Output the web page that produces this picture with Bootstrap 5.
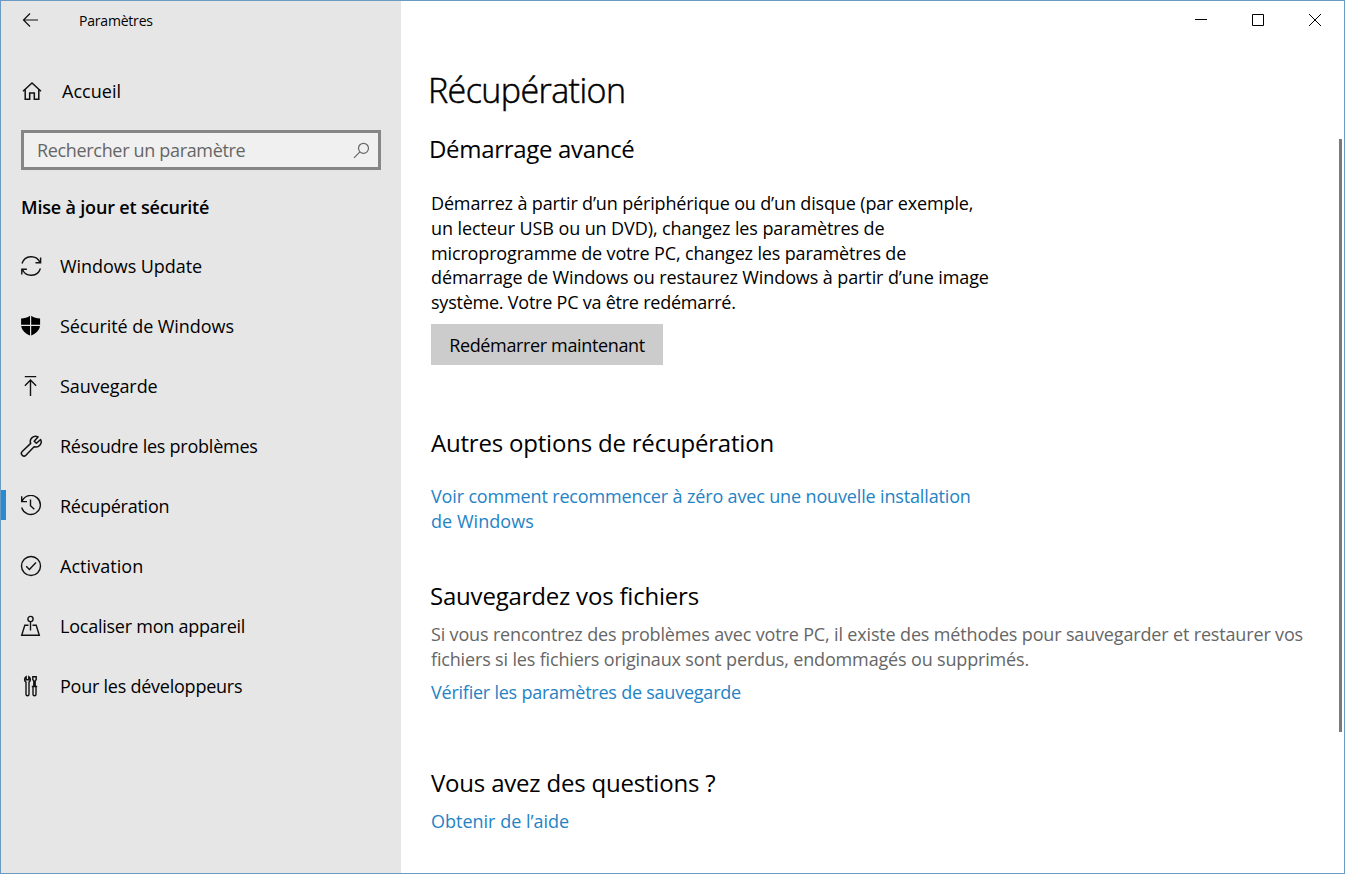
<!DOCTYPE html>
<html lang="fr">
<head>
<meta charset="utf-8">
<meta name="viewport" content="width=device-width, initial-scale=1">
<title>Paramètres</title>
<link href="https://cdn.jsdelivr.net/npm/bootstrap@5.3.0/dist/css/bootstrap.min.css" rel="stylesheet">
<style>
  body { font-family: "Open Sans", "Noto Sans", sans-serif; font-size: 18px; line-height: 24.8px; letter-spacing: -.15px; color: #000; }
  .app-window { border: 1px solid #6b9bc3; background: #fff; }
  .side-pane { width: 400px; background: #e6e6e6; }
  .side-title { height: 40px; font-size: 14px; padding-left: 21px; letter-spacing: -.2px; }
  .side-title svg { margin: -2px 40px 0 0; }
  .side-link { height: 60px; padding: 0 0 0 19px; color: #000; border-radius: 0; position: relative; letter-spacing: -.24px; }
  .side-link:hover { color: #000; }
  .side-link svg { width: 22px; height: 22px; margin-right: 18px; flex: none; }
  .side-link.active::before { content: ""; position: absolute; left: 0; top: 14px; width: 5px; height: 30px; background: #2a8ad0; }
  .home-link { height: 60px; margin-top: 20px; }
  .home-link svg { margin-right: 20px; }
  .search-box { height: 40px; margin: 9px 20px 0; border: 3px solid #868686; background: #f0f0f0; padding: 0 8px 0 13px; color: #666; letter-spacing: -.33px; }
  .side-head { height: 59px; margin: 7px 0 0 20px; font-size: 18px; font-weight: 600; letter-spacing: -.18px; line-height: 60px; }
  .ls-wide { letter-spacing: .05px; }
  .ls-zero { letter-spacing: -.06px; }
  .caption-bar { height: 38px; padding-right: 22px; gap: 43px; }
  .page-body { padding: 0 36px 0 30px; }
  .page-title { font-size: 34px; font-weight: 300; -webkit-text-stroke: .5px #000; letter-spacing: -.58px; line-height: 46px; margin: 28px 0 0 -3px; }
  .section-title { font-size: 24px; font-weight: 400; line-height: 34px; letter-spacing: -.2px; margin: 0; }
  .t-line { display: block; white-space: nowrap; }
  .lines-a { margin-top: 25px; }
  .l-2 { letter-spacing: -.1px; }
  .l-5 { letter-spacing: -.23px; }
  .restart-btn { width: 232px; height: 41px; margin-top: 9px; border: 0; border-radius: 0; background: #ccc; color: #000; font-size: 18px; letter-spacing: -.36px; padding: 1px 0 0; line-height: 41px; }
  .action-link { color: #2483c5; text-decoration: none; }
  .muted-text { color: #666; letter-spacing: -.16px; line-height: 25px; }
  .scroll-thumb { position: absolute; right: 2px; top: 138px; width: 3px; height: 593px; background: #7a7a7a; }
  .title-adv { margin: 19px 0 0 -2px; letter-spacing: -.31px; }
  .sec-other { margin-top: 61px; }
  .sec-other .action-link { margin-top: 24px; }
  .sec-files { margin-top: 45px; }
  .sec-files .section-title { margin-left: -1px; }
  .sec-files .muted-text { margin-top: 9px; }
  .sec-files .action-link { margin-top: 8px; }
  .sec-help { margin-top: 61.5px; }
  .sec-help .action-link { margin-top: 9px; letter-spacing: 0; }
</style>
</head>
<body class="overflow-hidden">
<div class="app-window d-flex vh-100 position-relative">
  <aside class="side-pane flex-shrink-0 d-flex flex-column">
    <div class="side-title d-flex align-items-center">
      <svg width="17" height="16" viewBox="0 0 17 16" fill="none" stroke="#111" stroke-width="1.2"><path d="M16 8H1.6M8 1.5 1.5 8 8 14.5"/></svg>
      <span>Paramètres</span>
    </div>
    <a class="side-link home-link nav-link d-flex align-items-center" href="#">
      <svg viewBox="0 0 22 22" fill="none" stroke="#111" stroke-width="1.5"><path d="M3 11.2 12 3l9 8.2M5.2 9.5V19.3H9.7V13H14.3V19.3H18.8V9.5"/></svg>
      <span class="ls-wide">Accueil</span>
    </a>
    <div class="search-box d-flex align-items-center justify-content-between">
      <span>Rechercher un paramètre</span>
      <svg width="17" height="17" viewBox="0 0 17 17" fill="none" stroke="#666" stroke-width="1.2"><circle cx="10.5" cy="6.3" r="5"/><path d="M6.9 9.9 1 15.8"/></svg>
    </div>
    <h2 class="side-head mb-0">Mise à jour et sécurité</h2>
    <nav class="nav flex-column">
      <a class="side-link nav-link d-flex align-items-center" href="#">
        <svg viewBox="0 0 22 22" fill="none" stroke="#111" stroke-width="1.4"><path d="M2 8.5A9.6 9.6 0 0 1 20 7.5M20.6 2.5V7.7H15.5M20.4 13.5A9.6 9.6 0 0 1 2.4 14.5M1.8 19.5V14.3H6.9"/></svg>
        <span class="ls-zero">Windows Update</span>
      </a>
      <a class="side-link nav-link d-flex align-items-center" href="#">
        <svg viewBox="0 0 22 22" fill="#000"><path d="M10 .8V9.8H1.1V3.4C4.5 3.4 7.5 2.6 10 .8ZM11.2 .8C13.7 2.6 16.700 3.4 20.1 3.4V9.8H11.2ZM1.200 11H10V20.6C5 18.3 1.8 15.3 1.2 11ZM11.2 11H20C19.400 15.3 16.200 18.3 11.2 20.6Z"/></svg>
        <span class="ls-zero">Sécurité de Windows</span>
      </a>
      <a class="side-link nav-link d-flex align-items-center" href="#">
        <svg viewBox="0 0 22 22" fill="none" stroke="#111" stroke-width="1.4"><path d="M4.8 1.6H16.2M10.5 21V5.2M4.9 10.7 10.5 5.1 16.1 10.7"/></svg>
        <span class="ls-zero">Sauvegarde</span>
      </a>
      <a class="side-link nav-link d-flex align-items-center" href="#">
        <svg viewBox="0 0 22 22" fill="none" stroke="#111" stroke-width="1.5" stroke-linejoin="round"><path d="M18 1.9A5.2 5.2 0 0 0 10.7 8.4L2.2 16.5A2.6 2.6 0 0 0 5.9 20.2L14.1 11.7A5.2 5.2 0 0 0 20.6 4.5L16.4 8.3 14.2 6.2Z"/></svg>
        <span>Résoudre les problèmes</span>
      </a>
      <a class="side-link nav-link active d-flex align-items-center" href="#">
        <svg viewBox="0 0 22 22" fill="none" stroke="#111" stroke-width="1.4"><path d="M2.3 5.8A9.5 9.5 0 1 1 1.7 12.5M1.7 1.2V6.6H7M10.5 4.500V10.700L14.3 14.3"/></svg>
        <span>Récupération</span>
      </a>
      <a class="side-link nav-link d-flex align-items-center" href="#">
        <svg viewBox="0 0 22 22" fill="none" stroke="#111" stroke-width="1.4"><circle cx="11" cy="11" r="9.5"/><path d="M6.2 11.2 9.4 14.4 16 7.6"/></svg>
        <span class="ls-wide">Activation</span>
      </a>
      <a class="side-link nav-link d-flex align-items-center" href="#">
        <svg viewBox="0 0 22 22" fill="none" stroke="#111" stroke-width="1.4"><circle cx="10.5" cy="4" r="2.6"/><path d="M10.5 6.6V15.5M8.5 10.2H4.8L1.7 20.2H19.3L16.2 10.2H12.5"/></svg>
        <span>Localiser mon appareil</span>
      </a>
      <a class="side-link nav-link d-flex align-items-center" href="#">
        <svg viewBox="0 0 22 22" fill="none" stroke="#111" stroke-width="1.4"><path d="M6.2 1.7V4.7H8.8V1.7C11 3 10.8 6 9 7.2V19.2A1.5 1.5 0 0 1 6 19.2V7.2C4.2 6 4 3 6.2 1.7ZM12.8 1.7H16.2V4.5L15.2 6V11.5H13.8V6L12.8 4.5ZM11.8 11.5H17.2M13 11.5V19.2A1.5 1.5 0 0 0 16 19.2V11.5"/></svg>
        <span>Pour les développeurs</span>
      </a>
    </nav>
  </aside>
  <main class="flex-grow-1">
    <div class="caption-bar d-flex justify-content-end align-items-center">
      <svg width="14" height="14" viewBox="0 0 14 14" stroke="#000" fill="none"><path d="M1 6.5H13"/></svg>
      <svg width="14" height="14" viewBox="0 0 14 14" stroke="#000" fill="none"><path d="M1.5 1.5H12.5V12.5H1.5Z"/></svg>
      <svg width="14" height="14" viewBox="0 0 14 14" stroke="#000" fill="none"><path d="M1 1 13 13M13 1 1 13"/></svg>
    </div>
    <div class="page-body">
      <h1 class="page-title">Récupération</h1>
      <section>
        <h2 class="section-title title-adv">Démarrage avancé</h2>
        <p class="lines-a mb-0">
          <span class="t-line">Démarrez à partir d’un périphérique ou d’un disque (par exemple,</span>
          <span class="t-line l-2">un lecteur USB ou un DVD), changez les paramètres de</span>
          <span class="t-line">microprogramme de votre PC, changez les paramètres de</span>
          <span class="t-line l-2">démarrage de Windows ou restaurez Windows à partir d’une image</span>
          <span class="t-line l-5">système. Votre PC va être redémarré.</span>
        </p>
        <button class="btn restart-btn" type="button">Redémarrer maintenant</button>
      </section>
      <section class="sec-other">
        <h2 class="section-title">Autres options de récupération</h2>
        <a class="action-link d-block" href="#"><span class="t-line">Voir comment recommencer à zéro avec une nouvelle installation</span><span class="t-line ls-wide">de Windows</span></a>
      </section>
      <section class="sec-files">
        <h2 class="section-title">Sauvegardez vos fichiers</h2>
        <p class="muted-text mb-0"><span class="t-line">Si vous rencontrez des problèmes avec votre PC, il existe des méthodes pour sauvegarder et restaurer vos</span><span class="t-line">fichiers si les fichiers originaux sont perdus, endommagés ou supprimés.</span></p>
        <a class="action-link d-block l-5" href="#">Vérifier les paramètres de sauvegarde</a>
      </section>
      <section class="sec-help">
        <h2 class="section-title">Vous avez des questions ?</h2>
        <a class="action-link d-block" href="#">Obtenir de l’aide</a>
      </section>
    </div>
  </main>
  <div class="scroll-thumb"></div>
</div>
<script src="https://cdn.jsdelivr.net/npm/bootstrap@5.3.0/dist/js/bootstrap.bundle.min.js"></script>
</body>
</html>
